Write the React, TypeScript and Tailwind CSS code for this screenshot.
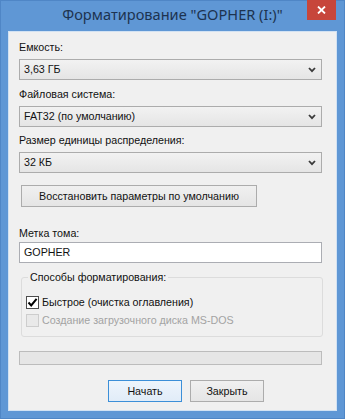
import { FC } from "react";

const Combo: FC<{ value: string }> = ({ value }) => (
  <div className="h-[21px] w-[303px] flex items-center justify-between border border-[#acacac] bg-gradient-to-b from-[#f2f2f2] to-[#e5e5e5] pl-[4px] pr-[5px]">
    <span className="leading-[19px]">{value}</span>
    <svg width="8" height="6" viewBox="0 0 8 6">
      <polyline points="1,1 4,4.2 7,1" fill="none" stroke="#3a3a3a" strokeWidth="1.8" />
    </svg>
  </div>
);

const Label: FC<{ text: string; className?: string }> = ({ text, className = "" }) => (
  <div className={`h-[15px] leading-[15px] ${className}`}>{text}</div>
);

const Button: FC<{ text: string; primary?: boolean; className?: string }> = ({ text, primary, className = "" }) => (
  <div
    className={`h-[22px] flex items-center justify-center border bg-gradient-to-b ${
      primary
        ? "border-[#3c8fd8] from-[#eef5fc] to-[#e1ecf8]"
        : "border-[#acacac] from-[#f0f0f0] to-[#e5e5e5]"
    } ${className}`}
  >
    {text}
  </div>
);

export default function App() {
  return (
    <div className="w-[345px] h-[419px] bg-[#5f97d5] border border-[#4f86c6] flex flex-col font-['Liberation_Sans',Arial,sans-serif] text-[10.7px] text-[#111]">
      <div className="relative h-[30px] flex items-center justify-center">
        <span className="font-['Noto_Sans',sans-serif] text-[14.6px] text-[#1d3350] pb-[2px]">Форматирование "GOPHER (I:)"</span>
        <div className="absolute right-[8px] top-[-1px] w-[29px] h-[20px] bg-[#c7463b] flex items-center justify-center">
          <svg width="9" height="8" viewBox="0 0 9 8">
            <path d="M1 0.5 L8 7.5 M8 0.5 L1 7.5" stroke="#fff" strokeWidth="1.8" />
          </svg>
        </div>
      </div>

      <div className="mx-[7px] mb-[7px] flex-1 bg-[#f0f0f0] border border-[#d2e2f3] pl-[10px] pt-[8px]">
        <Label text="Емкость:" />
        <div className="mt-[4px]">
          <Combo value="3,63 ГБ" />
        </div>

        <Label text="Файловая система:" className="mt-[7px]" />
        <div className="mt-[4px]">
          <Combo value="FAT32 (по умолчанию)" />
        </div>

        <Label text="Размер единицы распределения:" className="mt-[6px]" />
        <div className="mt-[4px]">
          <Combo value="32 КБ" />
        </div>

        <Button text="Восстановить параметры по умолчанию" className="mt-[12px] ml-[2px] w-[236px]" />

        <Label text="Метка тома:" className="mt-[19px]" />
        <div className="mt-[1px] h-[21px] w-[303px] border border-[#abadb3] bg-white pl-[4px] leading-[19px]">
          GOPHER
        </div>

        <fieldset className="mt-[7px] ml-[2px] w-[302px] border border-[#dcdcdc] rounded-[3px] px-[4px] pb-[7px]">
          <legend className="ml-[2px] px-[2px] h-[15px] leading-[15px]">Способы форматирования:</legend>
          <div className="mt-[8px] h-[18px] flex items-center gap-[3px]">
            <div className="w-[13px] h-[13px] border border-[#4d4d4d] bg-white flex items-center justify-center">
              <svg width="11" height="11" viewBox="0 0 11 11">
                <path d="M1.5 5.5 L4.2 8.4 L9.6 1.8" fill="none" stroke="#000" strokeWidth="2" />
              </svg>
            </div>
            <span>Быстрое (очистка оглавления)</span>
          </div>
          <div className="h-[18px] flex items-center gap-[3px]">
            <div className="w-[13px] h-[13px] border border-[#cdcdcd] bg-[#e9e9e9]" />
            <span className="text-[#a3a3a3]">Создание загрузочного диска MS-DOS</span>
          </div>
        </fieldset>

        <div className="mt-[14px] h-[14px] w-[303px] border border-[#bcbcbc] bg-[#e6e6e6]" />

        <div className="mt-[15px] flex gap-[8px] pl-[89px]">
          <Button text="Начать" primary className="w-[74px]" />
          <Button text="Закрыть" className="w-[74px]" />
        </div>
      </div>
    </div>
  );
}
